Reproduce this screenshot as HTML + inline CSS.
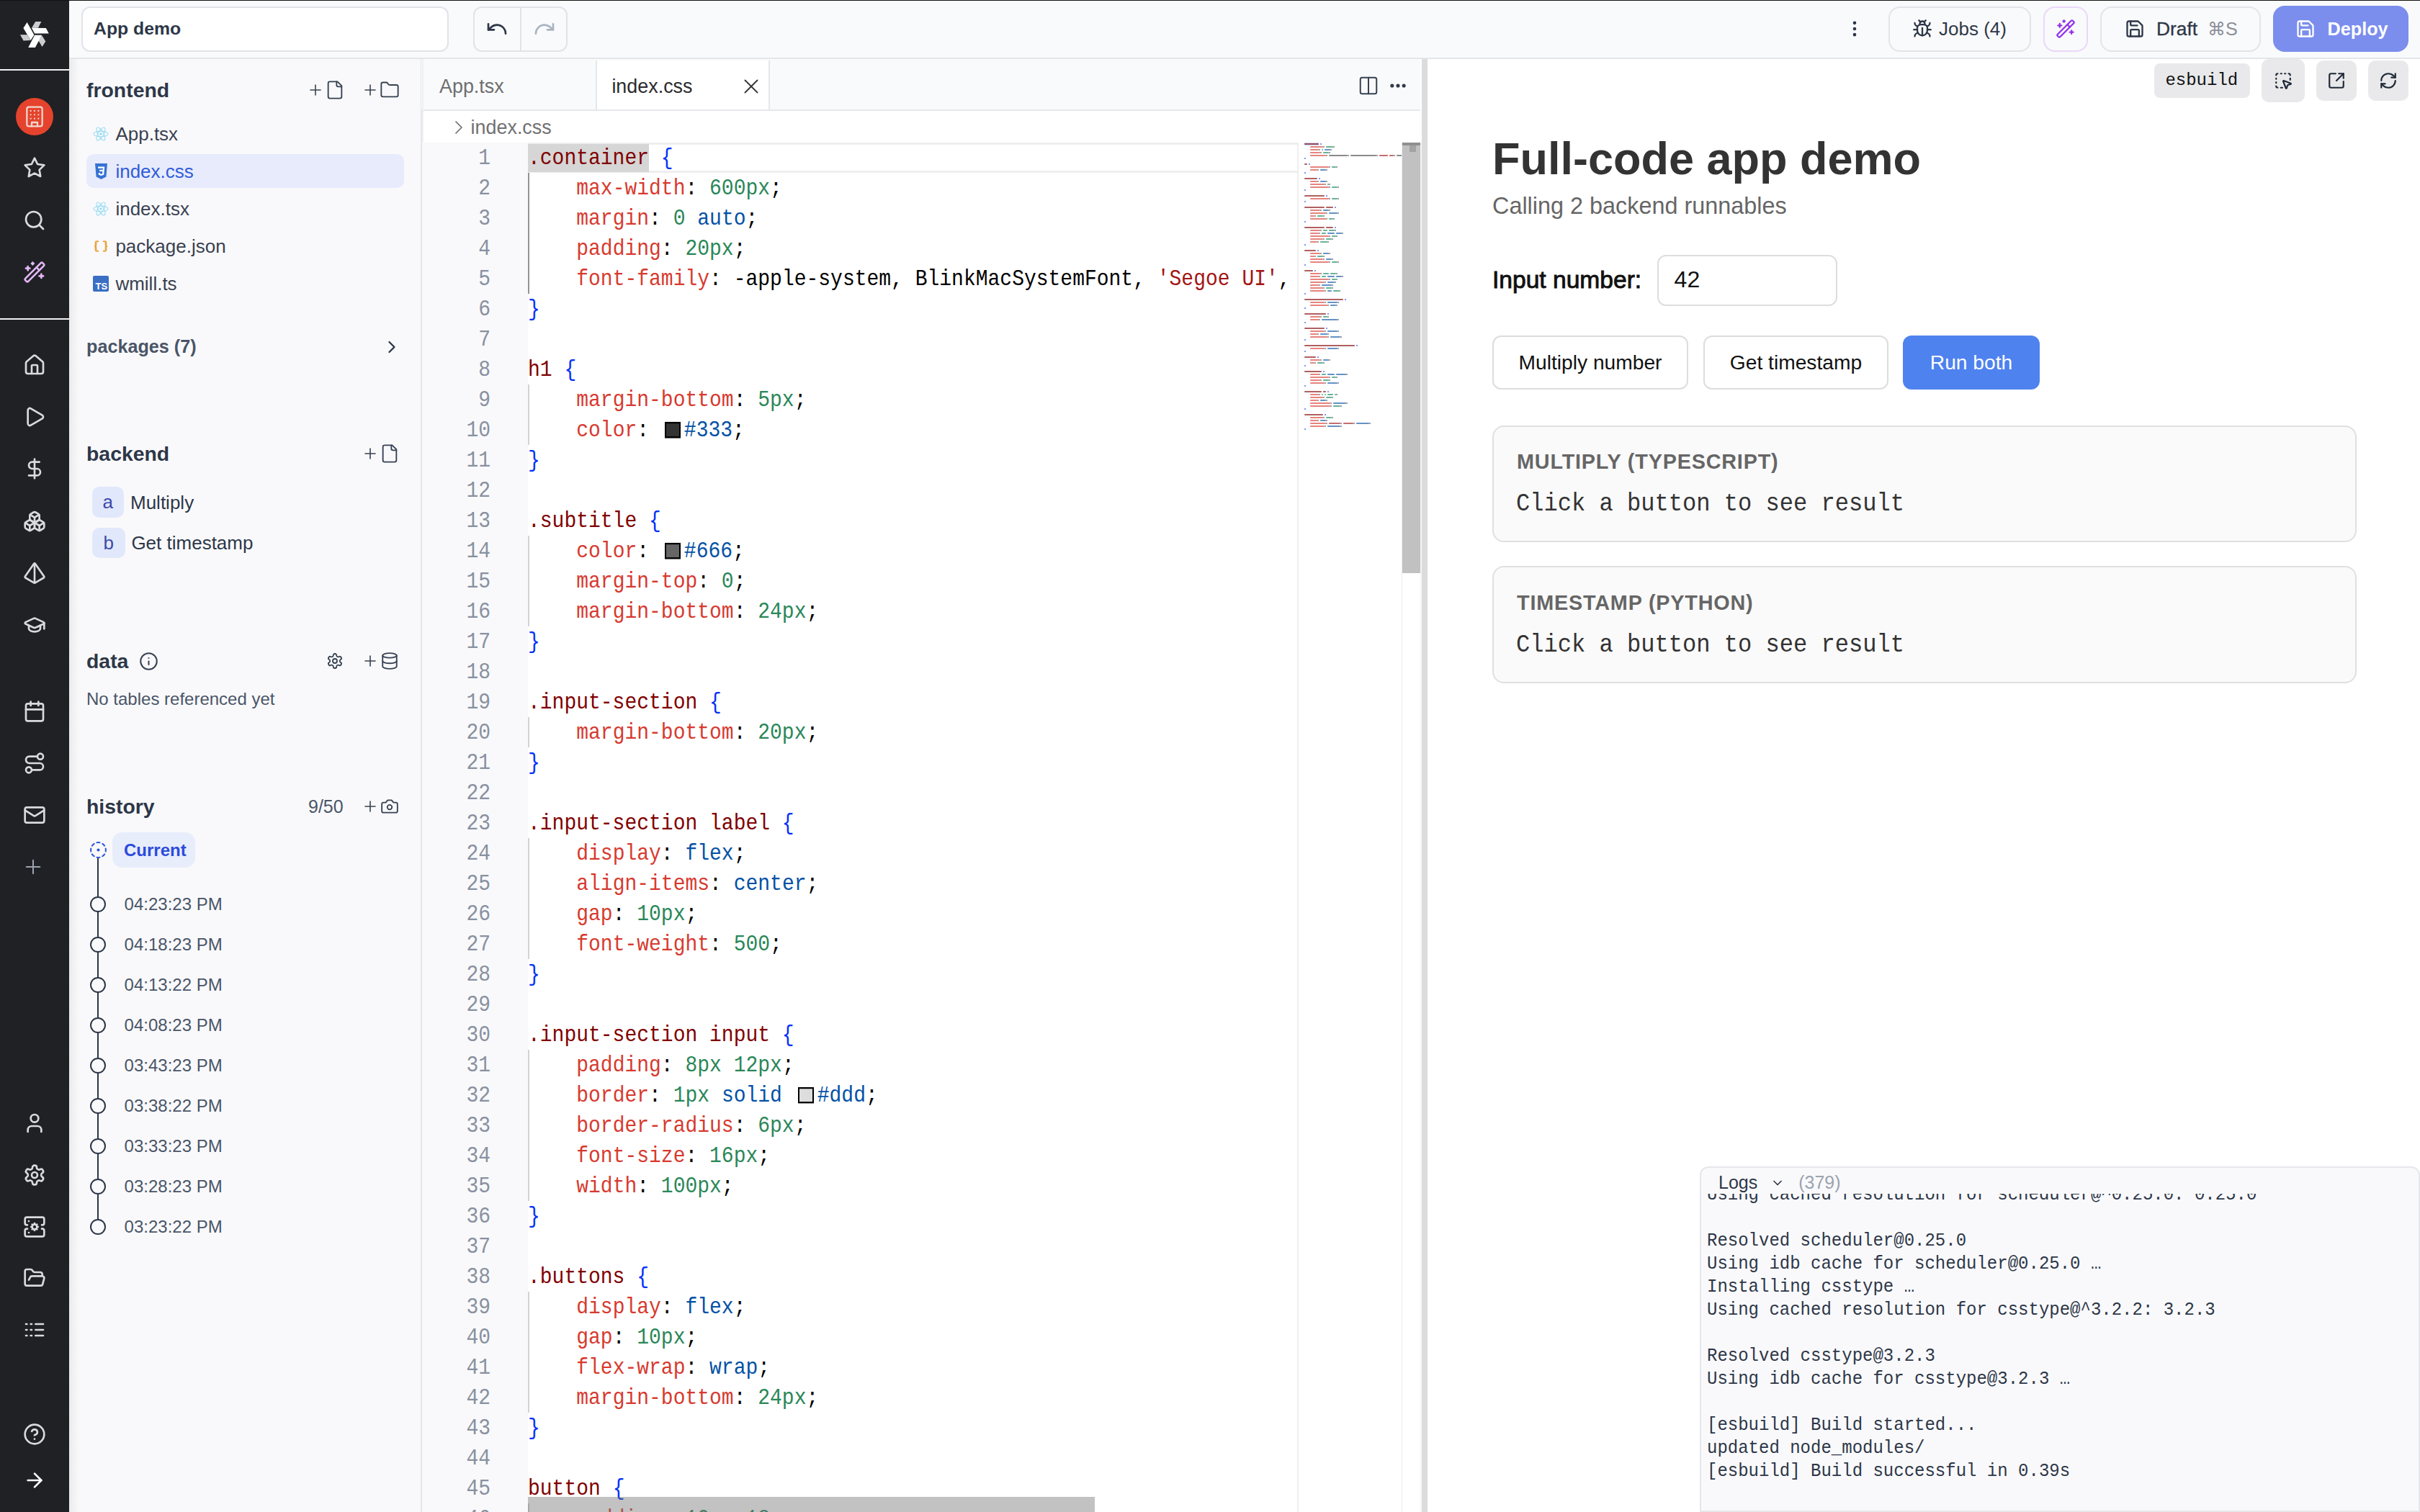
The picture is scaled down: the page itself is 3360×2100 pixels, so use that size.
<!DOCTYPE html><html><head><meta charset="utf-8"><style>html,body{margin:0;padding:0;width:3360px;height:2100px;overflow:hidden;background:#fff}
#r{zoom:2;width:1680px;height:1050px;position:relative;overflow:hidden;font-family:"Liberation Sans",sans-serif;color:#2d3748}
.a{position:absolute}
svg.i{position:absolute;fill:none;stroke:currentColor;stroke-width:2;stroke-linecap:round;stroke-linejoin:round;overflow:visible}
.t{position:absolute;white-space:pre;line-height:1}
/* sidebar */
#sb{left:0;top:0;width:48px;height:1050px;background:#1f2125}
.sbi{color:#d9dadd}
/* topbar */
#tb{left:48px;top:0;width:1632px;height:40px;background:#f9fafb;border-bottom:1px solid #e4e6ea}
.btn{position:absolute;box-sizing:border-box;border:1px solid #e2e4e9;border-radius:8px}
/* left panel */
#lp{left:48px;top:41px;width:244px;height:1009px;background:#f9f9fb;border-right:1px solid #e5e7eb}
.h{font-weight:700;font-size:14px;color:#2d3748}
.fr{font-size:13px;color:#2d3748}
/* editor */
#ed{left:293px;top:41px;width:693px;height:1009px;background:#fff}
.code{position:absolute;left:366.5px;font-family:"Liberation Mono",monospace;font-size:14px;line-height:21px;white-space:pre;color:#000}
.ln{position:absolute;left:293px;width:47.5px;text-align:right;font-family:"Liberation Mono",monospace;font-size:14px;line-height:21px;color:#8891a0}
.s{color:#800000}.p{color:#d73a2f}.n{color:#2a8758}.k{color:#0451a5}.b{color:#0431fa}.q{color:#a31515}
.sw{display:inline-block;box-sizing:border-box;width:11px;height:10px;border:1.2px solid #000;margin:0 2.5px 0 2.5px;vertical-align:-1px}
.cl{height:21px;line-height:21px;white-space:pre}.cl>span{display:inline-block;transform:translateY(0.9px) scaleY(1.12);transform-origin:0 60%}
</style></head><body><div id="r"><div id="sb" class="a"><svg class="a" style="left:14px;top:14px;width:20px;height:20px" viewBox="0 0 20 20">
<g fill="#cdcdcf"><path d="M10.6 1 L14.7 1 L12.5 5.35 L8.04 5.35Z"/><path d="M15.07 10.63 L17.67 14.7 L15.26 18.5 L12.76 14.24Z"/><path d="M-0.02 10.07 L4.89 10.07 L7.1 14.06 L2.3 14.24Z"/></g>
<g fill="#ffffff"><path d="M4.8 1.56 L9.7 10.26 L7.3 14.06 L2.2 5.54Z"/><path d="M7.94 5.35 L17.94 5.44 L19.9 9.24 L10.07 9.24Z"/><path d="M10.07 10.35 L15.07 10.35 L10.44 18.96 L5.63 18.96Z"/></g></svg><div class="a" style="left:0;top:48px;width:48px;height:1.2px;background:#f2f2f4"></div><div class="a" style="left:11px;top:68px;width:26px;height:26px;border-radius:50%;background:#e5432d"></div><svg class="i" viewBox="0 0 24 24" style="left:15.90px;top:73.20px;width:16px;height:16px;stroke-width:1.7;color:#f3d6d0"><rect width="16" height="20" x="4" y="2" rx="2" ry="2"/><path d="M9 22v-4h6v4"/><path d="M8 6h.01"/><path d="M16 6h.01"/><path d="M12 6h.01"/><path d="M12 10h.01"/><path d="M12 14h.01"/><path d="M16 10h.01"/><path d="M16 14h.01"/><path d="M8 10h.01"/><path d="M8 14h.01"/></svg><svg class="i" viewBox="0 0 24 24" style="left:16.00px;top:108.70px;width:16px;height:16px;stroke-width:2;color:#d9dadd"><polygon points="12 2 15.09 8.26 22 9.27 17 14.14 18.18 21.02 12 17.77 5.82 21.02 7 14.14 2 9.27 8.91 8.26 12 2"/></svg><svg class="i" viewBox="0 0 24 24" style="left:16.00px;top:144.80px;width:16px;height:16px;stroke-width:2;color:#d9dadd"><circle cx="11" cy="11" r="8"/><path d="m21 21-4.3-4.3"/></svg><svg class="i" viewBox="0 0 24 24" style="left:16.00px;top:180.90px;width:16px;height:16px;stroke-width:2;color:#e4b6f7"><path d="m21.64 3.64-1.28-1.28a1.21 1.21 0 0 0-1.72 0L2.36 18.64a1.21 1.21 0 0 0 0 1.72l1.28 1.28a1.2 1.2 0 0 0 1.72 0L21.64 5.36a1.2 1.2 0 0 0 0-1.72"/><path d="m14 7 3 3"/><path d="M5 6v4"/><path d="M19 14v4"/><path d="M10 2v2"/><path d="M7 8H3"/><path d="M21 16h-4"/><path d="M11 3H9"/></svg><div class="a" style="left:0;top:221px;width:48px;height:1.2px;background:#f2f2f4"></div><svg class="i" viewBox="0 0 24 24" style="left:16.00px;top:245.50px;width:16px;height:16px;stroke-width:2;color:#d9dadd"><path d="M15 21v-8a1 1 0 0 0-1-1h-4a1 1 0 0 0-1 1v8"/><path d="M3 10a2 2 0 0 1 .709-1.528l7-5.999a2 2 0 0 1 2.582 0l7 5.999A2 2 0 0 1 21 10v9a2 2 0 0 1-2 2H5a2 2 0 0 1-2-2z"/></svg><svg class="i" viewBox="0 0 24 24" style="left:16.00px;top:281.60px;width:16px;height:16px;stroke-width:2;color:#d9dadd"><path d="M5 5a2 2 0 0 1 3.008-1.728l11.997 6.998a2 2 0 0 1 .003 3.458l-12 7A2 2 0 0 1 5 19z"/></svg><svg class="i" viewBox="0 0 24 24" style="left:16.00px;top:317.70px;width:16px;height:16px;stroke-width:2;color:#d9dadd"><line x1="12" x2="12" y1="2" y2="22"/><path d="M17 5H9.5a3.5 3.5 0 0 0 0 7h5a3.5 3.5 0 0 1 0 7H6"/></svg><svg class="i" viewBox="0 0 24 24" style="left:16.00px;top:353.80px;width:16px;height:16px;stroke-width:2;color:#d9dadd"><path d="M2.97 12.92A2 2 0 0 0 2 14.63v3.24a2 2 0 0 0 .97 1.71l3 1.8a2 2 0 0 0 2.06 0L12 19v-5.5l-5-3-4.03 2.42Z"/><path d="m7 16.5-4.74-2.85"/><path d="m7 16.5 5-3"/><path d="M7 16.5v5.17"/><path d="M12 13.5V19l3.97 2.38a2 2 0 0 0 2.06 0l3-1.8a2 2 0 0 0 .97-1.71v-3.24a2 2 0 0 0-.97-1.71L17 10.5l-5 3Z"/><path d="m17 16.5-5-3"/><path d="m17 16.5 4.74-2.85"/><path d="M17 16.5v5.17"/><path d="M7.97 4.42A2 2 0 0 0 7 6.13v4.37l5 3 5-3V6.13a2 2 0 0 0-.97-1.71l-3-1.8a2 2 0 0 0-2.06 0l-3 1.8Z"/><path d="M12 8 7.26 5.15"/><path d="m12 8 4.74-2.85"/><path d="M12 13.5V8"/></svg><svg class="i" viewBox="0 0 24 24" style="left:16.00px;top:390.00px;width:16px;height:16px;stroke-width:2;color:#d9dadd"><path d="M2.5 16.88a1 1 0 0 1-.32-1.43l9-13.02a1 1 0 0 1 1.64 0l9 13.01a1 1 0 0 1-.33 1.44l-8.49 5.02a2 2 0 0 1-2.02 0z"/><path d="M12 2v20"/></svg><svg class="i" viewBox="0 0 24 24" style="left:16.00px;top:426.00px;width:16px;height:16px;stroke-width:2;color:#d9dadd"><path d="M21.42 10.922a1 1 0 0 0-.019-1.838L12.83 5.18a2 2 0 0 0-1.66 0L2.6 9.08a1 1 0 0 0 0 1.832l8.57 3.908a2 2 0 0 0 1.66 0z"/><path d="M22 10v6"/><path d="M6 12.5V16a6 3 0 0 0 12 0v-3.5"/></svg><svg class="i" viewBox="0 0 24 24" style="left:16.00px;top:485.75px;width:16px;height:16px;stroke-width:2;color:#d9dadd"><rect width="18" height="18" x="3" y="4" rx="2"/><path d="M16 2v4"/><path d="M8 2v4"/><path d="M3 10h18"/></svg><svg class="i" viewBox="0 0 24 24" style="left:16.00px;top:522.00px;width:16px;height:16px;stroke-width:2;color:#d9dadd"><circle cx="6" cy="19" r="3"/><path d="M9 19h8.5a3.5 3.5 0 0 0 0-7h-11a3.5 3.5 0 0 1 0-7H15"/><circle cx="18" cy="5" r="3"/></svg><svg class="i" viewBox="0 0 24 24" style="left:16.00px;top:558.00px;width:16px;height:16px;stroke-width:2;color:#d9dadd"><rect width="20" height="16" x="2" y="4" rx="2"/><path d="m22 7-8.97 5.7a1.94 1.94 0 0 1-2.06 0L2 7"/></svg><svg class="i" viewBox="0 0 24 24" style="left:16.00px;top:772.00px;width:16px;height:16px;stroke-width:2;color:#d9dadd"><path d="M19 21v-2a4 4 0 0 0-4-4H9a4 4 0 0 0-4 4v2"/><circle cx="12" cy="7" r="4"/></svg><svg class="i" viewBox="0 0 24 24" style="left:16.00px;top:808.00px;width:16px;height:16px;stroke-width:2;color:#d9dadd"><path d="M12.22 2h-.44a2 2 0 0 0-2 2v.18a2 2 0 0 1-1 1.73l-.43.25a2 2 0 0 1-2 0l-.15-.08a2 2 0 0 0-2.73.73l-.22.38a2 2 0 0 0 .73 2.73l.15.1a2 2 0 0 1 1 1.72v.51a2 2 0 0 1-1 1.74l-.15.09a2 2 0 0 0-.73 2.73l.22.38a2 2 0 0 0 2.73.73l.15-.08a2 2 0 0 1 2 0l.43.25a2 2 0 0 1 1 1.73V20a2 2 0 0 0 2 2h.44a2 2 0 0 0 2-2v-.18a2 2 0 0 1 1-1.73l.43-.25a2 2 0 0 1 2 0l.15.08a2 2 0 0 0 2.73-.73l.22-.39a2 2 0 0 0-.73-2.73l-.15-.08a2 2 0 0 1-1-1.74v-.5a2 2 0 0 1 1-1.74l.15-.09a2 2 0 0 0 .73-2.73l-.22-.38a2 2 0 0 0-2.73-.73l-.15.08a2 2 0 0 1-2 0l-.43-.25a2 2 0 0 1-1-1.73V4a2 2 0 0 0-2-2z"/><circle cx="12" cy="12" r="3"/></svg><svg class="i" viewBox="0 0 24 24" style="left:16.00px;top:844.00px;width:16px;height:16px;stroke-width:2;color:#d9dadd"><circle cx="12" cy="12" r="2.6"/><path d="M12 8.4v1M12 14.6v1M8.4 12h1M14.6 12h1M9.5 9.5l.7.7M13.8 13.8l.7.7M9.5 14.5l.7-.7M13.8 10.2l.7-.7"/><path d="M4.5 10H4a2 2 0 0 1-2-2V4a2 2 0 0 1 2-2h16a2 2 0 0 1 2 2v4a2 2 0 0 1-2 2h-.5"/><path d="M4.5 14H4a2 2 0 0 0-2 2v4a2 2 0 0 0 2 2h16a2 2 0 0 0 2-2v-4a2 2 0 0 0-2-2h-.5"/><path d="M6 18h.01"/><path d="M6 6h.01"/></svg><svg class="i" viewBox="0 0 24 24" style="left:16.00px;top:879.50px;width:16px;height:16px;stroke-width:2;color:#d9dadd"><path d="m6 14 1.5-2.9A2 2 0 0 1 9.24 10H20a2 2 0 0 1 1.94 2.5l-1.54 6a2 2 0 0 1-1.95 1.5H4a2 2 0 0 1-2-2V5a2 2 0 0 1 2-2h3.9a2 2 0 0 1 1.69.9l.81 1.2a2 2 0 0 0 1.67.9H18a2 2 0 0 1 2 2v2"/></svg><svg class="i" viewBox="0 0 24 24" style="left:16.00px;top:915.60px;width:16px;height:16px;stroke-width:2;color:#d9dadd"><path d="M13 12h8"/><path d="M13 18h8"/><path d="M13 6h8"/><path d="M3 12h1"/><path d="M3 18h1"/><path d="M3 6h1"/><path d="M8 12h1"/><path d="M8 18h1"/><path d="M8 6h1"/></svg><svg class="i" viewBox="0 0 24 24" style="left:16.00px;top:988.00px;width:16px;height:16px;stroke-width:2;color:#d9dadd"><circle cx="12" cy="12" r="10"/><path d="M9.09 9a3 3 0 0 1 5.83 1c0 2-3 3-3 3"/><path d="M12 17h.01"/></svg><svg class="i" viewBox="0 0 24 24" style="left:16.00px;top:1019.80px;width:16px;height:16px;stroke-width:2;color:#ffffff"><path d="M5 12h14"/><path d="m12 5 7 7-7 7"/></svg><svg class="i" viewBox="0 0 24 24" style="left:15.00px;top:594.00px;width:16px;height:16px;stroke-width:1.5;color:#9ca3af"><path d="M5 12h14"/><path d="M12 5v14"/></svg></div><div id="tb" class="a"></div><div class="a" style="left:0;top:0;width:1680px;height:0.6px;background:#111"></div><div class="a" style="left:56.5px;top:4.5px;width:255px;height:31.25px;box-sizing:border-box;border:1px solid #e1e3e8;border-radius:6px;background:#fff"></div><div class="t" style="left:65px;top:14.00px;font-size:12.4px;height:12.4px;line-height:12.4px;color:#2d3748;font-weight:700;font-family:'Liberation Sans';">App demo</div><div class="a" style="left:328.5px;top:4.5px;width:65.5px;height:31.25px;box-sizing:border-box;border:1px solid #e1e3e8;border-radius:6px;background:#f9fafb"></div><div class="a" style="left:361px;top:5px;width:1px;height:30.25px;background:#e1e3e8"></div><svg class="i" viewBox="0 0 24 24" style="left:337.00px;top:11.90px;width:16px;height:16px;stroke-width:2;color:#2d3748"><path d="M3 7v6h6"/><path d="M21 17a9 9 0 0 0-9-9 9 9 0 0 0-6 2.3L3 13"/></svg><svg class="i" viewBox="0 0 24 24" style="left:370.00px;top:11.90px;width:16px;height:16px;stroke-width:2;color:#a9b4c2"><path d="M21 7v6h-6"/><path d="M3 17a9 9 0 0 1 9-9 9 9 0 0 1 6 2.3l3 2.7"/></svg><svg class="i" viewBox="0 0 24 24" style="left:1280.50px;top:13.00px;width:14px;height:14px;stroke-width:2;color:#2d3748"><circle cx="12" cy="12" r="1"/><circle cx="12" cy="5" r="1"/><circle cx="12" cy="19" r="1"/></svg><div class="btn" style="left:1311px;top:4.25px;width:99px;height:31.5px"></div><svg class="i" viewBox="0 0 24 24" style="left:1327.50px;top:13.20px;width:14px;height:14px;stroke-width:2;color:#2d3748"><path d="m8 2 1.88 1.88"/><path d="M14.12 3.88 16 2"/><path d="M9 7.13v-1a3.003 3.003 0 1 1 6 0v1"/><path d="M12 20c-3.3 0-6-2.7-6-6v-3a4 4 0 0 1 4-4h4a4 4 0 0 1 4 4v3c0 3.3-2.7 6-6 6"/><path d="M12 20v-9"/><path d="M6.53 9C4.6 8.8 3 7.1 3 5"/><path d="M6 13H2"/><path d="M3 21c0-2.1 1.7-3.9 3.8-4"/><path d="M20.97 5c0 2.1-1.6 3.8-3.5 4"/><path d="M22 13h-4"/><path d="M17.2 17c2.1.1 3.8 1.9 3.8 4"/></svg><div class="t" style="left:1346px;top:13.70px;font-size:13px;height:13px;line-height:13px;color:#2d3748;font-weight:400;font-family:'Liberation Sans';">Jobs (4)</div><div class="btn" style="left:1418.4px;top:4.25px;width:31.2px;height:31.5px;border-color:#ead7fb"></div><svg class="i" viewBox="0 0 24 24" style="left:1427.00px;top:13.00px;width:14px;height:14px;stroke-width:2;color:#9333ea"><path d="m21.64 3.64-1.28-1.28a1.21 1.21 0 0 0-1.72 0L2.36 18.64a1.21 1.21 0 0 0 0 1.72l1.28 1.28a1.2 1.2 0 0 0 1.72 0L21.64 5.36a1.2 1.2 0 0 0 0-1.72"/><path d="m14 7 3 3"/><path d="M5 6v4"/><path d="M19 14v4"/><path d="M10 2v2"/><path d="M7 8H3"/><path d="M21 16h-4"/><path d="M11 3H9"/></svg><div class="btn" style="left:1458px;top:4.25px;width:111.5px;height:31.5px"></div><svg class="i" viewBox="0 0 24 24" style="left:1474.80px;top:13.20px;width:14px;height:14px;stroke-width:2;color:#2d3748"><path d="M15.2 3a2 2 0 0 1 1.4.6l3.8 3.8a2 2 0 0 1 .6 1.4V19a2 2 0 0 1-2 2H5a2 2 0 0 1-2-2V5a2 2 0 0 1 2-2z"/><path d="M17 21v-7a1 1 0 0 0-1-1H8a1 1 0 0 0-1 1v7"/><path d="M7 3v4a1 1 0 0 0 1 1h7"/></svg><div class="t" style="left:1497px;top:13.60px;font-size:13.2px;height:13.2px;line-height:13.2px;color:#2d3748;font-weight:400;font-family:'Liberation Sans';-webkit-text-stroke:0.15px #2d3748">Draft</div><div class="t" style="left:1532.5px;top:13.90px;font-size:12.6px;height:12.6px;line-height:12.6px;color:#8b9099;font-weight:400;font-family:'Liberation Sans';">⌘S</div><div class="a" style="left:1578px;top:4px;width:94px;height:32px;border-radius:8px;background:#7b8eed"></div><svg class="i" viewBox="0 0 24 24" style="left:1593.50px;top:13.20px;width:14px;height:14px;stroke-width:2;color:#ffffff"><path d="M15.2 3a2 2 0 0 1 1.4.6l3.8 3.8a2 2 0 0 1 .6 1.4V19a2 2 0 0 1-2 2H5a2 2 0 0 1-2-2V5a2 2 0 0 1 2-2z"/><path d="M17 21v-7a1 1 0 0 0-1-1H8a1 1 0 0 0-1 1v7"/><path d="M7 3v4a1 1 0 0 0 1 1h7"/></svg><div class="t" style="left:1615.8px;top:13.90px;font-size:12.6px;height:12.6px;line-height:12.6px;color:#ffffff;font-weight:700;font-family:'Liberation Sans';">Deploy</div><div id="lp" class="a"></div><div class="a" style="left:48px;top:41px;width:7px;height:1009px;background:linear-gradient(to right,#ebebee,rgba(249,249,251,0))"></div><div class="t" style="left:60px;top:55.40px;font-size:14.2px;height:14.2px;line-height:14.2px;color:#2d3748;font-weight:700;font-family:'Liberation Sans';">frontend</div><svg class="i" viewBox="0 0 24 24" style="left:212.80px;top:56.50px;width:12px;height:12px;stroke-width:1.6;color:#364152"><path d="M5 12h14"/><path d="M12 5v14"/></svg><svg class="i" viewBox="0 0 24 24" style="left:225.25px;top:55.50px;width:14px;height:14px;stroke-width:1.6;color:#364152"><path d="M15 2H6a2 2 0 0 0-2 2v16a2 2 0 0 0 2 2h12a2 2 0 0 0 2-2V7Z"/><path d="M14 2v4a2 2 0 0 0 2 2h4"/></svg><svg class="i" viewBox="0 0 24 24" style="left:250.80px;top:56.50px;width:12px;height:12px;stroke-width:1.6;color:#364152"><path d="M5 12h14"/><path d="M12 5v14"/></svg><svg class="i" viewBox="0 0 24 24" style="left:263.40px;top:55.50px;width:14px;height:14px;stroke-width:1.6;color:#364152"><path d="M20 20a2 2 0 0 0 2-2V8a2 2 0 0 0-2-2h-7.9a2 2 0 0 1-1.69-.9L9.6 3.9A2 2 0 0 0 7.93 3H4a2 2 0 0 0-2 2v13a2 2 0 0 0 2 2Z"/></svg><div class="a" style="left:60px;top:107px;width:220.5px;height:23.7px;border-radius:5px;background:#e7ebfb"></div><svg class="a" style="left:64.5px;top:87.4px;width:11px;height:11px" viewBox="-12 -12 24 24"><g fill="none" stroke="#9bdcf3" stroke-width="1.2"><ellipse rx="11" ry="4.2"/><ellipse rx="11" ry="4.2" transform="rotate(60)"/><ellipse rx="11" ry="4.2" transform="rotate(120)"/></g><circle r="2" fill="#9bdcf3"/></svg><div class="t" style="left:80.2px;top:86.40px;font-size:13px;height:13px;line-height:13px;color:#394150;font-weight:400;font-family:'Liberation Sans';">App.tsx</div><svg class="a" style="left:65.5px;top:113.5px;width:9.5px;height:11px" viewBox="0 0 19 22"><path d="M1 0h17l-1.6 18.5L9.5 22 2.6 18.5z" fill="#3572d2"/><path d="M5 4.5h9.2l-1 11.2-3.7 1.4-3.6-1.4-.2-2.6h2.2l.1 1.2 1.5.5 1.6-.5.3-3.2H7.2V8.8h4.8l.2-2H5.2z" fill="#fff"/></svg><div class="t" style="left:80.2px;top:112.50px;font-size:13px;height:13px;line-height:13px;color:#2f5bd8;font-weight:400;font-family:'Liberation Sans';">index.css</div><svg class="a" style="left:64.5px;top:139.5px;width:11px;height:11px" viewBox="-12 -12 24 24"><g fill="none" stroke="#9bdcf3" stroke-width="1.2"><ellipse rx="11" ry="4.2"/><ellipse rx="11" ry="4.2" transform="rotate(60)"/><ellipse rx="11" ry="4.2" transform="rotate(120)"/></g><circle r="2" fill="#9bdcf3"/></svg><div class="t" style="left:80.2px;top:138.50px;font-size:13px;height:13px;line-height:13px;color:#394150;font-weight:400;font-family:'Liberation Sans';">index.tsx</div><svg class="a" style="left:64px;top:166.5px;width:12px;height:9px" viewBox="0 0 24 24" preserveAspectRatio="none" fill="none" stroke="#eba43a" stroke-width="2.6" stroke-linecap="round"><path d="M8 3H7a2 2 0 0 0-2 2v5a2 2 0 0 1-2 2 2 2 0 0 1 2 2v5a2 2 0 0 0 2 2h1"/><path d="M16 21h1a2 2 0 0 0 2-2v-5c0-1.1.9-2 2-2a2 2 0 0 1-2-2V5a2 2 0 0 0-2-2h-1"/></svg><div class="t" style="left:80.2px;top:164.50px;font-size:13px;height:13px;line-height:13px;color:#394150;font-weight:400;font-family:'Liberation Sans';">package.json</div><div class="a" style="left:64.3px;top:191.3px;width:11.4px;height:11.4px;background:#3b6fc4;border-radius:1px"></div><div class="t" style="left:66.3px;top:195.3px;font-size:6.5px;line-height:7px;color:#fff;font-weight:700">TS</div><div class="t" style="left:80.2px;top:190.50px;font-size:13px;height:13px;line-height:13px;color:#394150;font-weight:400;font-family:'Liberation Sans';">wmill.ts</div><div class="t" style="left:60px;top:234.50px;font-size:12.6px;height:12.6px;line-height:12.6px;color:#4a5568;font-weight:700;font-family:'Liberation Sans';">packages (7)</div><svg class="i" viewBox="0 0 24 24" style="left:265.00px;top:234.00px;width:14px;height:14px;stroke-width:2;color:#2d3748"><path d="m9 18 6-6-6-6"/></svg><div class="t" style="left:60px;top:307.90px;font-size:14.2px;height:14.2px;line-height:14.2px;color:#2d3748;font-weight:700;font-family:'Liberation Sans';">backend</div><svg class="i" viewBox="0 0 24 24" style="left:250.80px;top:309.00px;width:12px;height:12px;stroke-width:1.6;color:#364152"><path d="M5 12h14"/><path d="M12 5v14"/></svg><svg class="i" viewBox="0 0 24 24" style="left:263.30px;top:308.00px;width:14px;height:14px;stroke-width:1.6;color:#364152"><path d="M15 2H6a2 2 0 0 0-2 2v16a2 2 0 0 0 2 2h12a2 2 0 0 0 2-2V7Z"/><path d="M14 2v4a2 2 0 0 0 2 2h4"/></svg><div class="a" style="left:64px;top:338px;width:22px;height:21.5px;border-radius:5px;background:#e2e8fb"></div><div class="t" style="left:71.3px;top:342.00px;font-size:13px;height:13px;line-height:13px;color:#3b4ba8;font-weight:400;font-family:'Liberation Sans';">a</div><div class="t" style="left:90.5px;top:342.50px;font-size:13px;height:13px;line-height:13px;color:#2d3748;font-weight:400;font-family:'Liberation Sans';">Multiply</div><div class="a" style="left:64px;top:366.4px;width:23px;height:21px;border-radius:5px;background:#e2e8fb"></div><div class="t" style="left:71.8px;top:370.50px;font-size:13px;height:13px;line-height:13px;color:#3b4ba8;font-weight:400;font-family:'Liberation Sans';">b</div><div class="t" style="left:91.2px;top:370.50px;font-size:13px;height:13px;line-height:13px;color:#2d3748;font-weight:400;font-family:'Liberation Sans';">Get timestamp</div><div class="t" style="left:60px;top:451.90px;font-size:14.2px;height:14.2px;line-height:14.2px;color:#2d3748;font-weight:700;font-family:'Liberation Sans';">data</div><svg class="i" viewBox="0 0 24 24" style="left:96.25px;top:452.25px;width:13.5px;height:13.5px;stroke-width:1.8;color:#364152"><circle cx="12" cy="12" r="10"/><path d="M12 16v-4"/><path d="M12 8h.01"/></svg><svg class="i" viewBox="0 0 24 24" style="left:226.50px;top:453.00px;width:12px;height:12px;stroke-width:1.8;color:#364152"><path d="M12.22 2h-.44a2 2 0 0 0-2 2v.18a2 2 0 0 1-1 1.73l-.43.25a2 2 0 0 1-2 0l-.15-.08a2 2 0 0 0-2.73.73l-.22.38a2 2 0 0 0 .73 2.73l.15.1a2 2 0 0 1 1 1.72v.51a2 2 0 0 1-1 1.74l-.15.09a2 2 0 0 0-.73 2.73l.22.38a2 2 0 0 0 2.73.73l.15-.08a2 2 0 0 1 2 0l.43.25a2 2 0 0 1 1 1.73V20a2 2 0 0 0 2 2h.44a2 2 0 0 0 2-2v-.18a2 2 0 0 1 1-1.73l.43-.25a2 2 0 0 1 2 0l.15.08a2 2 0 0 0 2.73-.73l.22-.39a2 2 0 0 0-.73-2.73l-.15-.08a2 2 0 0 1-1-1.74v-.5a2 2 0 0 1 1-1.74l.15-.09a2 2 0 0 0 .73-2.73l-.22-.38a2 2 0 0 0-2.73-.73l-.15.08a2 2 0 0 1-2 0l-.43-.25a2 2 0 0 1-1-1.73V4a2 2 0 0 0-2-2z"/><circle cx="12" cy="12" r="3"/></svg><svg class="i" viewBox="0 0 24 24" style="left:250.80px;top:453.00px;width:12px;height:12px;stroke-width:1.6;color:#364152"><path d="M5 12h14"/><path d="M12 5v14"/></svg><svg class="i" viewBox="0 0 24 24" style="left:263.80px;top:452.50px;width:13px;height:13px;stroke-width:1.7;color:#364152"><ellipse cx="12" cy="5" rx="9" ry="3"/><path d="M3 5V19A9 3 0 0 0 21 19V5"/><path d="M3 12A9 3 0 0 0 21 12"/></svg><div class="t" style="left:60px;top:479.60px;font-size:12px;height:12px;line-height:12px;color:#4a5568;font-weight:400;font-family:'Liberation Sans';">No tables referenced yet</div><div class="t" style="left:60px;top:552.90px;font-size:14.2px;height:14.2px;line-height:14.2px;color:#2d3748;font-weight:700;font-family:'Liberation Sans';">history</div><div class="t" style="left:214px;top:553.75px;font-size:12.5px;height:12.5px;line-height:12.5px;color:#4a5568;font-weight:400;font-family:'Liberation Sans';">9/50</div><svg class="i" viewBox="0 0 24 24" style="left:250.80px;top:554.00px;width:12px;height:12px;stroke-width:1.6;color:#364152"><path d="M5 12h14"/><path d="M12 5v14"/></svg><svg class="i" viewBox="0 0 24 24" style="left:263.80px;top:553.50px;width:13px;height:13px;stroke-width:1.7;color:#364152"><path d="M14.5 4h-5L7 7H4a2 2 0 0 0-2 2v9a2 2 0 0 0 2 2h16a2 2 0 0 0 2-2V9a2 2 0 0 0-2-2h-3l-2.5-3z"/><circle cx="12" cy="13" r="3"/></svg><div class="a" style="left:78px;top:578px;width:57.5px;height:24.5px;border-radius:7px;background:#e8edfc"></div><div class="t" style="left:86px;top:584.30px;font-size:12px;height:12px;line-height:12px;color:#2c4bdc;font-weight:700;font-family:'Liberation Sans';">Current</div><svg class="i" viewBox="0 0 24 24" style="left:61.75px;top:583.75px;width:12.5px;height:12.5px;stroke-width:2;color:#3056dc"><path d="M10.1 2.182a10 10 0 0 1 3.8 0"/><path d="M13.9 21.818a10 10 0 0 1-3.8 0"/><path d="M17.609 3.721a10 10 0 0 1 2.69 2.7"/><path d="M2.182 13.9a10 10 0 0 1 0-3.8"/><path d="M20.279 17.609a10 10 0 0 1-2.7 2.69"/><path d="M21.818 10.1a10 10 0 0 1 0 3.8"/><path d="M3.721 6.391a10 10 0 0 1 2.7-2.69"/><path d="M6.391 20.279a10 10 0 0 1-2.69-2.7"/><circle cx="12" cy="12" r="1"/></svg><div class="a" style="left:67.25px;top:596px;width:1px;height:256px;background:#2d3748"></div><div class="a" style="left:62.55px;top:622.55px;width:10.9px;height:10.9px;box-sizing:border-box;border:1px solid #2d3748;border-radius:50%;background:#f9f9fb"></div><div class="t" style="left:86.3px;top:622.00px;font-size:12px;height:12px;line-height:12px;color:#4a5568;font-weight:400;font-family:'Liberation Sans';">04:23:23 PM</div><div class="a" style="left:62.55px;top:650.55px;width:10.9px;height:10.9px;box-sizing:border-box;border:1px solid #2d3748;border-radius:50%;background:#f9f9fb"></div><div class="t" style="left:86.3px;top:650.00px;font-size:12px;height:12px;line-height:12px;color:#4a5568;font-weight:400;font-family:'Liberation Sans';">04:18:23 PM</div><div class="a" style="left:62.55px;top:678.55px;width:10.9px;height:10.9px;box-sizing:border-box;border:1px solid #2d3748;border-radius:50%;background:#f9f9fb"></div><div class="t" style="left:86.3px;top:678.00px;font-size:12px;height:12px;line-height:12px;color:#4a5568;font-weight:400;font-family:'Liberation Sans';">04:13:22 PM</div><div class="a" style="left:62.55px;top:706.55px;width:10.9px;height:10.9px;box-sizing:border-box;border:1px solid #2d3748;border-radius:50%;background:#f9f9fb"></div><div class="t" style="left:86.3px;top:706.00px;font-size:12px;height:12px;line-height:12px;color:#4a5568;font-weight:400;font-family:'Liberation Sans';">04:08:23 PM</div><div class="a" style="left:62.55px;top:734.55px;width:10.9px;height:10.9px;box-sizing:border-box;border:1px solid #2d3748;border-radius:50%;background:#f9f9fb"></div><div class="t" style="left:86.3px;top:734.00px;font-size:12px;height:12px;line-height:12px;color:#4a5568;font-weight:400;font-family:'Liberation Sans';">03:43:23 PM</div><div class="a" style="left:62.55px;top:762.55px;width:10.9px;height:10.9px;box-sizing:border-box;border:1px solid #2d3748;border-radius:50%;background:#f9f9fb"></div><div class="t" style="left:86.3px;top:762.00px;font-size:12px;height:12px;line-height:12px;color:#4a5568;font-weight:400;font-family:'Liberation Sans';">03:38:22 PM</div><div class="a" style="left:62.55px;top:790.55px;width:10.9px;height:10.9px;box-sizing:border-box;border:1px solid #2d3748;border-radius:50%;background:#f9f9fb"></div><div class="t" style="left:86.3px;top:790.00px;font-size:12px;height:12px;line-height:12px;color:#4a5568;font-weight:400;font-family:'Liberation Sans';">03:33:23 PM</div><div class="a" style="left:62.55px;top:818.55px;width:10.9px;height:10.9px;box-sizing:border-box;border:1px solid #2d3748;border-radius:50%;background:#f9f9fb"></div><div class="t" style="left:86.3px;top:818.00px;font-size:12px;height:12px;line-height:12px;color:#4a5568;font-weight:400;font-family:'Liberation Sans';">03:28:23 PM</div><div class="a" style="left:62.55px;top:846.55px;width:10.9px;height:10.9px;box-sizing:border-box;border:1px solid #2d3748;border-radius:50%;background:#f9f9fb"></div><div class="t" style="left:86.3px;top:846.00px;font-size:12px;height:12px;line-height:12px;color:#4a5568;font-weight:400;font-family:'Liberation Sans';">03:23:22 PM</div><div id="ed" class="a"></div><div class="a" style="left:292.5px;top:41px;width:693.5px;height:35px;background:#f9fafb;border-bottom:1px solid #e5e7eb"></div><div class="a" style="left:293px;top:41px;width:1px;height:1009px;background:#eef0f3"></div><div class="a" style="left:413.5px;top:42px;width:121px;height:34px;background:#fff;border-left:1px solid #e5e7eb;border-right:1px solid #e5e7eb;box-sizing:border-box"></div><div class="t" style="left:305px;top:53.27px;font-size:13.45px;height:13.45px;line-height:13.45px;color:#6e6e70;font-weight:400;font-family:'Liberation Sans';">App.tsx</div><div class="t" style="left:424.7px;top:53.27px;font-size:13.45px;height:13.45px;line-height:13.45px;color:#2b2b2d;font-weight:400;font-family:'Liberation Sans';">index.css</div><svg class="i" viewBox="0 0 24 24" style="left:512.90px;top:51.50px;width:17px;height:17px;stroke-width:1.3;color:#333333"><path d="M18 6 6 18"/><path d="m6 6 12 12"/></svg><svg class="i" viewBox="0 0 24 24" style="left:942.50px;top:52.00px;width:15px;height:15px;stroke-width:1.6;color:#364152"><rect width="18" height="18" x="3" y="3" rx="2"/><path d="M12 3v18"/></svg><svg class="i" viewBox="0 0 24 24" style="left:963.50px;top:52.50px;width:14px;height:14px;stroke-width:2.4;color:#2d3748"><circle cx="12" cy="12" r="1"/><circle cx="19" cy="12" r="1"/><circle cx="5" cy="12" r="1"/></svg><svg class="i" viewBox="0 0 24 24" style="left:310.50px;top:80.60px;width:16px;height:16px;stroke-width:1.3;color:#6e6e70"><path d="m9 18 6-6-6-6"/></svg><div class="t" style="left:326.8px;top:81.88px;font-size:13.45px;height:13.45px;line-height:13.45px;color:#717173;font-weight:400;font-family:'Liberation Sans';">index.css</div><div class="a" style="left:293px;top:99px;width:73.5px;height:951px;background:#f9f9fb"></div><div class="a" style="left:366.5px;top:99px;width:535px;height:21px;box-sizing:border-box;border-top:1.5px solid #eeeeee;border-bottom:1.5px solid #eeeeee"></div><div class="a" style="left:366.5px;top:100px;width:84px;height:19.5px;background:#d6d6d6"></div><div class="a" style="left:366.5px;top:120px;width:1px;height:84px;background:#939393"></div><div class="a" style="left:366.5px;top:267px;width:1px;height:42px;background:#d3d3d3"></div><div class="a" style="left:366.5px;top:372px;width:1px;height:63px;background:#d3d3d3"></div><div class="a" style="left:366.5px;top:498px;width:1px;height:21px;background:#d3d3d3"></div><div class="a" style="left:366.5px;top:582px;width:1px;height:84px;background:#d3d3d3"></div><div class="a" style="left:366.5px;top:729px;width:1px;height:105px;background:#d3d3d3"></div><div class="a" style="left:366.5px;top:897px;width:1px;height:84px;background:#d3d3d3"></div><div class="a" style="left:366.5px;top:1044px;width:1px;height:147px;background:#d3d3d3"></div><div class="ln" style="top:99px;height:951px;overflow:hidden"><div class="cl"><span>1</span></div><div class="cl"><span>2</span></div><div class="cl"><span>3</span></div><div class="cl"><span>4</span></div><div class="cl"><span>5</span></div><div class="cl"><span>6</span></div><div class="cl"><span>7</span></div><div class="cl"><span>8</span></div><div class="cl"><span>9</span></div><div class="cl"><span>10</span></div><div class="cl"><span>11</span></div><div class="cl"><span>12</span></div><div class="cl"><span>13</span></div><div class="cl"><span>14</span></div><div class="cl"><span>15</span></div><div class="cl"><span>16</span></div><div class="cl"><span>17</span></div><div class="cl"><span>18</span></div><div class="cl"><span>19</span></div><div class="cl"><span>20</span></div><div class="cl"><span>21</span></div><div class="cl"><span>22</span></div><div class="cl"><span>23</span></div><div class="cl"><span>24</span></div><div class="cl"><span>25</span></div><div class="cl"><span>26</span></div><div class="cl"><span>27</span></div><div class="cl"><span>28</span></div><div class="cl"><span>29</span></div><div class="cl"><span>30</span></div><div class="cl"><span>31</span></div><div class="cl"><span>32</span></div><div class="cl"><span>33</span></div><div class="cl"><span>34</span></div><div class="cl"><span>35</span></div><div class="cl"><span>36</span></div><div class="cl"><span>37</span></div><div class="cl"><span>38</span></div><div class="cl"><span>39</span></div><div class="cl"><span>40</span></div><div class="cl"><span>41</span></div><div class="cl"><span>42</span></div><div class="cl"><span>43</span></div><div class="cl"><span>44</span></div><div class="cl"><span>45</span></div><div class="cl"><span>46</span></div></div><div class="code" style="top:99px;height:951px;width:540px;overflow:hidden"><div class="cl"><span><span class="s">.container </span><span class="b">{</span></span></div><div class="cl"><span>    <span class="p">max-width</span>: <span class="n">600px</span>;</span></div><div class="cl"><span>    <span class="p">margin</span>: <span class="n">0</span> <span class="k">auto</span>;</span></div><div class="cl"><span>    <span class="p">padding</span>: <span class="n">20px</span>;</span></div><div class="cl"><span>    <span class="p">font-family</span>: -apple-system, BlinkMacSystemFont, <span class="q">&#x27;Segoe UI&#x27;</span>, Roboto, sans-serif;</span></div><div class="cl"><span><span class="b">}</span></span></div><div class="cl"><span></span></div><div class="cl"><span><span class="s">h1 </span><span class="b">{</span></span></div><div class="cl"><span>    <span class="p">margin-bottom</span>: <span class="n">5px</span>;</span></div><div class="cl"><span>    <span class="p">color</span>: <span class="sw" style="background:#333"></span><span class="k">#333</span>;</span></div><div class="cl"><span><span class="b">}</span></span></div><div class="cl"><span></span></div><div class="cl"><span><span class="s">.subtitle </span><span class="b">{</span></span></div><div class="cl"><span>    <span class="p">color</span>: <span class="sw" style="background:#666"></span><span class="k">#666</span>;</span></div><div class="cl"><span>    <span class="p">margin-top</span>: <span class="n">0</span>;</span></div><div class="cl"><span>    <span class="p">margin-bottom</span>: <span class="n">24px</span>;</span></div><div class="cl"><span><span class="b">}</span></span></div><div class="cl"><span></span></div><div class="cl"><span><span class="s">.input-section </span><span class="b">{</span></span></div><div class="cl"><span>    <span class="p">margin-bottom</span>: <span class="n">20px</span>;</span></div><div class="cl"><span><span class="b">}</span></span></div><div class="cl"><span></span></div><div class="cl"><span><span class="s">.input-section label </span><span class="b">{</span></span></div><div class="cl"><span>    <span class="p">display</span>: <span class="k">flex</span>;</span></div><div class="cl"><span>    <span class="p">align-items</span>: <span class="k">center</span>;</span></div><div class="cl"><span>    <span class="p">gap</span>: <span class="n">10px</span>;</span></div><div class="cl"><span>    <span class="p">font-weight</span>: <span class="n">500</span>;</span></div><div class="cl"><span><span class="b">}</span></span></div><div class="cl"><span></span></div><div class="cl"><span><span class="s">.input-section input </span><span class="b">{</span></span></div><div class="cl"><span>    <span class="p">padding</span>: <span class="n">8px</span> <span class="n">12px</span>;</span></div><div class="cl"><span>    <span class="p">border</span>: <span class="n">1px</span> <span class="k">solid</span> <span class="sw" style="background:#ddd"></span><span class="k">#ddd</span>;</span></div><div class="cl"><span>    <span class="p">border-radius</span>: <span class="n">6px</span>;</span></div><div class="cl"><span>    <span class="p">font-size</span>: <span class="n">16px</span>;</span></div><div class="cl"><span>    <span class="p">width</span>: <span class="n">100px</span>;</span></div><div class="cl"><span><span class="b">}</span></span></div><div class="cl"><span></span></div><div class="cl"><span><span class="s">.buttons </span><span class="b">{</span></span></div><div class="cl"><span>    <span class="p">display</span>: <span class="k">flex</span>;</span></div><div class="cl"><span>    <span class="p">gap</span>: <span class="n">10px</span>;</span></div><div class="cl"><span>    <span class="p">flex-wrap</span>: <span class="k">wrap</span>;</span></div><div class="cl"><span>    <span class="p">margin-bottom</span>: <span class="n">24px</span>;</span></div><div class="cl"><span><span class="b">}</span></span></div><div class="cl"><span></span></div><div class="cl"><span><span class="s">button </span><span class="b">{</span></span></div><div class="cl"><span>    <span class="p">padding</span>: <span class="n">10px</span> <span class="n">18px</span>;</span></div></div><div class="a" style="left:366.5px;top:1039.25px;width:393.5px;height:10.75px;background:rgba(110,110,110,0.42)"></div><div class="a" style="left:905px;top:99px;width:68px;height:951px;background:#fff;overflow:hidden"><div class="a" style="left:0.5px;top:0;width:10px;height:2px;background:#c7d6f5"></div><svg class="a" style="left:0.5px;top:0;width:68px;height:210px;opacity:0.62" viewBox="0 0 68 210"><rect x="0.1" y="0.50" width="9.8" height="1.0" fill="#800000"/><rect x="11.1" y="0.50" width="0.8" height="1.0" fill="#0431fa"/><rect x="4.1" y="2.50" width="8.8" height="1.0" fill="#d73a2f"/><rect x="13.1" y="2.50" width="0.8" height="1.0" fill="#444444"/><rect x="15.1" y="2.50" width="4.8" height="1.0" fill="#098658"/><rect x="20.1" y="2.50" width="0.8" height="1.0" fill="#444444"/><rect x="4.1" y="4.50" width="5.8" height="1.0" fill="#d73a2f"/><rect x="10.1" y="4.50" width="0.8" height="1.0" fill="#444444"/><rect x="12.1" y="4.50" width="0.8" height="1.0" fill="#098658"/><rect x="14.1" y="4.50" width="3.8" height="1.0" fill="#0451a5"/><rect x="18.1" y="4.50" width="0.8" height="1.0" fill="#444444"/><rect x="4.1" y="6.50" width="6.8" height="1.0" fill="#d73a2f"/><rect x="11.1" y="6.50" width="0.8" height="1.0" fill="#444444"/><rect x="13.1" y="6.50" width="3.8" height="1.0" fill="#098658"/><rect x="17.1" y="6.50" width="0.8" height="1.0" fill="#444444"/><rect x="4.1" y="8.50" width="10.8" height="1.0" fill="#d73a2f"/><rect x="15.1" y="8.50" width="0.8" height="1.0" fill="#444444"/><rect x="17.1" y="8.50" width="12.8" height="1.0" fill="#444444"/><rect x="30.1" y="8.50" width="0.8" height="1.0" fill="#444444"/><rect x="32.1" y="8.50" width="17.8" height="1.0" fill="#444444"/><rect x="50.1" y="8.50" width="0.8" height="1.0" fill="#444444"/><rect x="52.1" y="8.50" width="5.8" height="1.0" fill="#a31515"/><rect x="59.1" y="8.50" width="2.8" height="1.0" fill="#a31515"/><rect x="62.1" y="8.50" width="0.8" height="1.0" fill="#444444"/><rect x="64.1" y="8.50" width="5.8" height="1.0" fill="#444444"/><rect x="70.1" y="8.50" width="0.8" height="1.0" fill="#444444"/><rect x="72.1" y="8.50" width="9.8" height="1.0" fill="#444444"/><rect x="82.1" y="8.50" width="0.8" height="1.0" fill="#444444"/><rect x="0.1" y="10.50" width="0.8" height="1.0" fill="#0431fa"/><rect x="0.1" y="14.50" width="1.8" height="1.0" fill="#800000"/><rect x="3.1" y="14.50" width="0.8" height="1.0" fill="#0431fa"/><rect x="4.1" y="16.50" width="12.8" height="1.0" fill="#d73a2f"/><rect x="17.1" y="16.50" width="0.8" height="1.0" fill="#444444"/><rect x="19.1" y="16.50" width="2.8" height="1.0" fill="#098658"/><rect x="22.1" y="16.50" width="0.8" height="1.0" fill="#444444"/><rect x="4.1" y="18.50" width="4.8" height="1.0" fill="#d73a2f"/><rect x="9.1" y="18.50" width="0.8" height="1.0" fill="#444444"/><rect x="11.1" y="18.50" width="3.8" height="1.0" fill="#0451a5"/><rect x="15.1" y="18.50" width="0.8" height="1.0" fill="#444444"/><rect x="0.1" y="20.50" width="0.8" height="1.0" fill="#0431fa"/><rect x="0.1" y="24.50" width="8.8" height="1.0" fill="#800000"/><rect x="10.1" y="24.50" width="0.8" height="1.0" fill="#0431fa"/><rect x="4.1" y="26.50" width="4.8" height="1.0" fill="#d73a2f"/><rect x="9.1" y="26.50" width="0.8" height="1.0" fill="#444444"/><rect x="11.1" y="26.50" width="3.8" height="1.0" fill="#0451a5"/><rect x="15.1" y="26.50" width="0.8" height="1.0" fill="#444444"/><rect x="4.1" y="28.50" width="9.8" height="1.0" fill="#d73a2f"/><rect x="14.1" y="28.50" width="0.8" height="1.0" fill="#444444"/><rect x="16.1" y="28.50" width="0.8" height="1.0" fill="#098658"/><rect x="17.1" y="28.50" width="0.8" height="1.0" fill="#444444"/><rect x="4.1" y="30.50" width="12.8" height="1.0" fill="#d73a2f"/><rect x="17.1" y="30.50" width="0.8" height="1.0" fill="#444444"/><rect x="19.1" y="30.50" width="3.8" height="1.0" fill="#098658"/><rect x="23.1" y="30.50" width="0.8" height="1.0" fill="#444444"/><rect x="0.1" y="32.50" width="0.8" height="1.0" fill="#0431fa"/><rect x="0.1" y="36.50" width="13.8" height="1.0" fill="#800000"/><rect x="15.1" y="36.50" width="0.8" height="1.0" fill="#0431fa"/><rect x="4.1" y="38.50" width="12.8" height="1.0" fill="#d73a2f"/><rect x="17.1" y="38.50" width="0.8" height="1.0" fill="#444444"/><rect x="19.1" y="38.50" width="3.8" height="1.0" fill="#098658"/><rect x="23.1" y="38.50" width="0.8" height="1.0" fill="#444444"/><rect x="0.1" y="40.50" width="0.8" height="1.0" fill="#0431fa"/><rect x="0.1" y="44.50" width="13.8" height="1.0" fill="#800000"/><rect x="15.1" y="44.50" width="4.8" height="1.0" fill="#800000"/><rect x="21.1" y="44.50" width="0.8" height="1.0" fill="#0431fa"/><rect x="4.1" y="46.50" width="6.8" height="1.0" fill="#d73a2f"/><rect x="11.1" y="46.50" width="0.8" height="1.0" fill="#444444"/><rect x="13.1" y="46.50" width="3.8" height="1.0" fill="#0451a5"/><rect x="17.1" y="46.50" width="0.8" height="1.0" fill="#444444"/><rect x="4.1" y="48.50" width="10.8" height="1.0" fill="#d73a2f"/><rect x="15.1" y="48.50" width="0.8" height="1.0" fill="#444444"/><rect x="17.1" y="48.50" width="5.8" height="1.0" fill="#0451a5"/><rect x="23.1" y="48.50" width="0.8" height="1.0" fill="#444444"/><rect x="4.1" y="50.50" width="2.8" height="1.0" fill="#d73a2f"/><rect x="7.1" y="50.50" width="0.8" height="1.0" fill="#444444"/><rect x="9.1" y="50.50" width="3.8" height="1.0" fill="#098658"/><rect x="13.1" y="50.50" width="0.8" height="1.0" fill="#444444"/><rect x="4.1" y="52.50" width="10.8" height="1.0" fill="#d73a2f"/><rect x="15.1" y="52.50" width="0.8" height="1.0" fill="#444444"/><rect x="17.1" y="52.50" width="2.8" height="1.0" fill="#098658"/><rect x="20.1" y="52.50" width="0.8" height="1.0" fill="#444444"/><rect x="0.1" y="54.50" width="0.8" height="1.0" fill="#0431fa"/><rect x="0.1" y="58.50" width="13.8" height="1.0" fill="#800000"/><rect x="15.1" y="58.50" width="4.8" height="1.0" fill="#800000"/><rect x="21.1" y="58.50" width="0.8" height="1.0" fill="#0431fa"/><rect x="4.1" y="60.50" width="6.8" height="1.0" fill="#d73a2f"/><rect x="11.1" y="60.50" width="0.8" height="1.0" fill="#444444"/><rect x="13.1" y="60.50" width="2.8" height="1.0" fill="#098658"/><rect x="17.1" y="60.50" width="3.8" height="1.0" fill="#098658"/><rect x="21.1" y="60.50" width="0.8" height="1.0" fill="#444444"/><rect x="4.1" y="62.50" width="5.8" height="1.0" fill="#d73a2f"/><rect x="10.1" y="62.50" width="0.8" height="1.0" fill="#444444"/><rect x="12.1" y="62.50" width="2.8" height="1.0" fill="#098658"/><rect x="16.1" y="62.50" width="4.8" height="1.0" fill="#0451a5"/><rect x="22.1" y="62.50" width="3.8" height="1.0" fill="#0451a5"/><rect x="26.1" y="62.50" width="0.8" height="1.0" fill="#444444"/><rect x="4.1" y="64.50" width="12.8" height="1.0" fill="#d73a2f"/><rect x="17.1" y="64.50" width="0.8" height="1.0" fill="#444444"/><rect x="19.1" y="64.50" width="2.8" height="1.0" fill="#098658"/><rect x="22.1" y="64.50" width="0.8" height="1.0" fill="#444444"/><rect x="4.1" y="66.50" width="8.8" height="1.0" fill="#d73a2f"/><rect x="13.1" y="66.50" width="0.8" height="1.0" fill="#444444"/><rect x="15.1" y="66.50" width="3.8" height="1.0" fill="#098658"/><rect x="19.1" y="66.50" width="0.8" height="1.0" fill="#444444"/><rect x="4.1" y="68.50" width="4.8" height="1.0" fill="#d73a2f"/><rect x="9.1" y="68.50" width="0.8" height="1.0" fill="#444444"/><rect x="11.1" y="68.50" width="4.8" height="1.0" fill="#098658"/><rect x="16.1" y="68.50" width="0.8" height="1.0" fill="#444444"/><rect x="0.1" y="70.50" width="0.8" height="1.0" fill="#0431fa"/><rect x="0.1" y="74.50" width="7.8" height="1.0" fill="#800000"/><rect x="9.1" y="74.50" width="0.8" height="1.0" fill="#0431fa"/><rect x="4.1" y="76.50" width="6.8" height="1.0" fill="#d73a2f"/><rect x="11.1" y="76.50" width="0.8" height="1.0" fill="#444444"/><rect x="13.1" y="76.50" width="3.8" height="1.0" fill="#0451a5"/><rect x="17.1" y="76.50" width="0.8" height="1.0" fill="#444444"/><rect x="4.1" y="78.50" width="2.8" height="1.0" fill="#d73a2f"/><rect x="7.1" y="78.50" width="0.8" height="1.0" fill="#444444"/><rect x="9.1" y="78.50" width="3.8" height="1.0" fill="#098658"/><rect x="13.1" y="78.50" width="0.8" height="1.0" fill="#444444"/><rect x="4.1" y="80.50" width="8.8" height="1.0" fill="#d73a2f"/><rect x="13.1" y="80.50" width="0.8" height="1.0" fill="#444444"/><rect x="15.1" y="80.50" width="3.8" height="1.0" fill="#0451a5"/><rect x="19.1" y="80.50" width="0.8" height="1.0" fill="#444444"/><rect x="4.1" y="82.50" width="12.8" height="1.0" fill="#d73a2f"/><rect x="17.1" y="82.50" width="0.8" height="1.0" fill="#444444"/><rect x="19.1" y="82.50" width="3.8" height="1.0" fill="#098658"/><rect x="23.1" y="82.50" width="0.8" height="1.0" fill="#444444"/><rect x="0.1" y="84.50" width="0.8" height="1.0" fill="#0431fa"/><rect x="0.1" y="88.50" width="5.8" height="1.0" fill="#800000"/><rect x="7.1" y="88.50" width="0.8" height="1.0" fill="#0431fa"/><rect x="4.1" y="90.50" width="6.8" height="1.0" fill="#d73a2f"/><rect x="11.1" y="90.50" width="0.8" height="1.0" fill="#444444"/><rect x="13.1" y="90.50" width="3.8" height="1.0" fill="#098658"/><rect x="18.1" y="90.50" width="3.8" height="1.0" fill="#098658"/><rect x="22.1" y="90.50" width="0.8" height="1.0" fill="#444444"/><rect x="4.1" y="92.50" width="5.8" height="1.0" fill="#d73a2f"/><rect x="10.1" y="92.50" width="0.8" height="1.0" fill="#444444"/><rect x="12.1" y="92.50" width="2.8" height="1.0" fill="#098658"/><rect x="16.1" y="92.50" width="4.8" height="1.0" fill="#0451a5"/><rect x="22.1" y="92.50" width="3.8" height="1.0" fill="#0451a5"/><rect x="26.1" y="92.50" width="0.8" height="1.0" fill="#444444"/><rect x="4.1" y="94.50" width="12.8" height="1.0" fill="#d73a2f"/><rect x="17.1" y="94.50" width="0.8" height="1.0" fill="#444444"/><rect x="19.1" y="94.50" width="2.8" height="1.0" fill="#098658"/><rect x="22.1" y="94.50" width="0.8" height="1.0" fill="#444444"/><rect x="4.1" y="96.50" width="9.8" height="1.0" fill="#d73a2f"/><rect x="14.1" y="96.50" width="0.8" height="1.0" fill="#444444"/><rect x="16.1" y="96.50" width="4.8" height="1.0" fill="#0451a5"/><rect x="21.1" y="96.50" width="0.8" height="1.0" fill="#444444"/><rect x="4.1" y="98.50" width="5.8" height="1.0" fill="#d73a2f"/><rect x="10.1" y="98.50" width="0.8" height="1.0" fill="#444444"/><rect x="12.1" y="98.50" width="6.8" height="1.0" fill="#0451a5"/><rect x="19.1" y="98.50" width="0.8" height="1.0" fill="#444444"/><rect x="4.1" y="100.50" width="8.8" height="1.0" fill="#d73a2f"/><rect x="13.1" y="100.50" width="0.8" height="1.0" fill="#444444"/><rect x="15.1" y="100.50" width="3.8" height="1.0" fill="#098658"/><rect x="19.1" y="100.50" width="0.8" height="1.0" fill="#444444"/><rect x="4.1" y="102.50" width="9.8" height="1.0" fill="#d73a2f"/><rect x="14.1" y="102.50" width="0.8" height="1.0" fill="#444444"/><rect x="16.1" y="102.50" width="2.8" height="1.0" fill="#0451a5"/><rect x="20.1" y="102.50" width="3.8" height="1.0" fill="#098658"/><rect x="24.1" y="102.50" width="0.8" height="1.0" fill="#444444"/><rect x="0.1" y="104.50" width="0.8" height="1.0" fill="#0431fa"/><rect x="0.1" y="108.50" width="26.8" height="1.0" fill="#800000"/><rect x="28.1" y="108.50" width="0.8" height="1.0" fill="#0431fa"/><rect x="4.1" y="110.50" width="9.8" height="1.0" fill="#d73a2f"/><rect x="14.1" y="110.50" width="0.8" height="1.0" fill="#444444"/><rect x="16.1" y="110.50" width="6.8" height="1.0" fill="#0451a5"/><rect x="23.1" y="110.50" width="0.8" height="1.0" fill="#444444"/><rect x="4.1" y="112.50" width="11.8" height="1.0" fill="#d73a2f"/><rect x="16.1" y="112.50" width="0.8" height="1.0" fill="#444444"/><rect x="18.1" y="112.50" width="3.8" height="1.0" fill="#0451a5"/><rect x="22.1" y="112.50" width="0.8" height="1.0" fill="#444444"/><rect x="0.1" y="114.50" width="0.8" height="1.0" fill="#0431fa"/><rect x="0.1" y="118.50" width="14.8" height="1.0" fill="#800000"/><rect x="16.1" y="118.50" width="0.8" height="1.0" fill="#0431fa"/><rect x="4.1" y="120.50" width="6.8" height="1.0" fill="#d73a2f"/><rect x="11.1" y="120.50" width="0.8" height="1.0" fill="#444444"/><rect x="13.1" y="120.50" width="2.8" height="1.0" fill="#098658"/><rect x="16.1" y="120.50" width="0.8" height="1.0" fill="#444444"/><rect x="4.1" y="122.50" width="5.8" height="1.0" fill="#d73a2f"/><rect x="10.1" y="122.50" width="0.8" height="1.0" fill="#444444"/><rect x="12.1" y="122.50" width="10.8" height="1.0" fill="#0451a5"/><rect x="23.1" y="122.50" width="0.8" height="1.0" fill="#444444"/><rect x="0.1" y="124.50" width="0.8" height="1.0" fill="#0431fa"/><rect x="0.1" y="128.50" width="13.8" height="1.0" fill="#800000"/><rect x="15.1" y="128.50" width="0.8" height="1.0" fill="#0431fa"/><rect x="4.1" y="130.50" width="9.8" height="1.0" fill="#d73a2f"/><rect x="14.1" y="130.50" width="0.8" height="1.0" fill="#444444"/><rect x="16.1" y="130.50" width="6.8" height="1.0" fill="#0451a5"/><rect x="23.1" y="130.50" width="0.8" height="1.0" fill="#444444"/><rect x="4.1" y="132.50" width="4.8" height="1.0" fill="#d73a2f"/><rect x="9.1" y="132.50" width="0.8" height="1.0" fill="#444444"/><rect x="11.1" y="132.50" width="4.8" height="1.0" fill="#0451a5"/><rect x="16.1" y="132.50" width="0.8" height="1.0" fill="#444444"/><rect x="4.1" y="134.50" width="11.8" height="1.0" fill="#d73a2f"/><rect x="16.1" y="134.50" width="0.8" height="1.0" fill="#444444"/><rect x="18.1" y="134.50" width="6.8" height="1.0" fill="#0451a5"/><rect x="25.1" y="134.50" width="0.8" height="1.0" fill="#444444"/><rect x="0.1" y="136.50" width="0.8" height="1.0" fill="#0431fa"/><rect x="0.1" y="140.50" width="34.8" height="1.0" fill="#800000"/><rect x="36.1" y="140.50" width="0.8" height="1.0" fill="#0431fa"/><rect x="4.1" y="142.50" width="9.8" height="1.0" fill="#d73a2f"/><rect x="14.1" y="142.50" width="0.8" height="1.0" fill="#444444"/><rect x="16.1" y="142.50" width="6.8" height="1.0" fill="#0451a5"/><rect x="23.1" y="142.50" width="0.8" height="1.0" fill="#444444"/><rect x="0.1" y="144.50" width="0.8" height="1.0" fill="#0431fa"/><rect x="0.1" y="148.50" width="7.8" height="1.0" fill="#800000"/><rect x="9.1" y="148.50" width="0.8" height="1.0" fill="#0431fa"/><rect x="4.1" y="150.50" width="6.8" height="1.0" fill="#d73a2f"/><rect x="11.1" y="150.50" width="0.8" height="1.0" fill="#444444"/><rect x="13.1" y="150.50" width="3.8" height="1.0" fill="#0451a5"/><rect x="17.1" y="150.50" width="0.8" height="1.0" fill="#444444"/><rect x="4.1" y="152.50" width="2.8" height="1.0" fill="#d73a2f"/><rect x="7.1" y="152.50" width="0.8" height="1.0" fill="#444444"/><rect x="9.1" y="152.50" width="3.8" height="1.0" fill="#098658"/><rect x="13.1" y="152.50" width="0.8" height="1.0" fill="#444444"/><rect x="0.1" y="154.50" width="0.8" height="1.0" fill="#0431fa"/><rect x="0.1" y="158.50" width="11.8" height="1.0" fill="#800000"/><rect x="13.1" y="158.50" width="0.8" height="1.0" fill="#0431fa"/><rect x="4.1" y="160.50" width="5.8" height="1.0" fill="#d73a2f"/><rect x="10.1" y="160.50" width="0.8" height="1.0" fill="#444444"/><rect x="12.1" y="160.50" width="2.8" height="1.0" fill="#098658"/><rect x="16.1" y="160.50" width="4.8" height="1.0" fill="#0451a5"/><rect x="22.1" y="160.50" width="6.8" height="1.0" fill="#0451a5"/><rect x="29.1" y="160.50" width="0.8" height="1.0" fill="#444444"/><rect x="4.1" y="162.50" width="12.8" height="1.0" fill="#d73a2f"/><rect x="17.1" y="162.50" width="0.8" height="1.0" fill="#444444"/><rect x="19.1" y="162.50" width="2.8" height="1.0" fill="#098658"/><rect x="22.1" y="162.50" width="0.8" height="1.0" fill="#444444"/><rect x="4.1" y="164.50" width="6.8" height="1.0" fill="#d73a2f"/><rect x="11.1" y="164.50" width="0.8" height="1.0" fill="#444444"/><rect x="13.1" y="164.50" width="3.8" height="1.0" fill="#098658"/><rect x="17.1" y="164.50" width="0.8" height="1.0" fill="#444444"/><rect x="4.1" y="166.50" width="9.8" height="1.0" fill="#d73a2f"/><rect x="14.1" y="166.50" width="0.8" height="1.0" fill="#444444"/><rect x="16.1" y="166.50" width="6.8" height="1.0" fill="#0451a5"/><rect x="23.1" y="166.50" width="0.8" height="1.0" fill="#444444"/><rect x="0.1" y="168.50" width="0.8" height="1.0" fill="#0431fa"/><rect x="0.1" y="172.50" width="11.8" height="1.0" fill="#800000"/><rect x="13.1" y="172.50" width="1.8" height="1.0" fill="#800000"/><rect x="16.1" y="172.50" width="0.8" height="1.0" fill="#0431fa"/><rect x="4.1" y="174.50" width="5.8" height="1.0" fill="#d73a2f"/><rect x="10.1" y="174.50" width="0.8" height="1.0" fill="#444444"/><rect x="12.1" y="174.50" width="0.8" height="1.0" fill="#098658"/><rect x="14.1" y="174.50" width="0.8" height="1.0" fill="#098658"/><rect x="16.1" y="174.50" width="3.8" height="1.0" fill="#098658"/><rect x="21.1" y="174.50" width="0.8" height="1.0" fill="#098658"/><rect x="22.1" y="174.50" width="0.8" height="1.0" fill="#444444"/><rect x="4.1" y="176.50" width="8.8" height="1.0" fill="#d73a2f"/><rect x="13.1" y="176.50" width="0.8" height="1.0" fill="#444444"/><rect x="15.1" y="176.50" width="3.8" height="1.0" fill="#098658"/><rect x="19.1" y="176.50" width="0.8" height="1.0" fill="#444444"/><rect x="4.1" y="178.50" width="4.8" height="1.0" fill="#d73a2f"/><rect x="9.1" y="178.50" width="0.8" height="1.0" fill="#444444"/><rect x="11.1" y="178.50" width="3.8" height="1.0" fill="#0451a5"/><rect x="15.1" y="178.50" width="0.8" height="1.0" fill="#444444"/><rect x="4.1" y="180.50" width="13.8" height="1.0" fill="#d73a2f"/><rect x="18.1" y="180.50" width="0.8" height="1.0" fill="#444444"/><rect x="20.1" y="180.50" width="8.8" height="1.0" fill="#0451a5"/><rect x="29.1" y="180.50" width="0.8" height="1.0" fill="#444444"/><rect x="4.1" y="182.50" width="13.8" height="1.0" fill="#d73a2f"/><rect x="18.1" y="182.50" width="0.8" height="1.0" fill="#444444"/><rect x="20.1" y="182.50" width="4.8" height="1.0" fill="#098658"/><rect x="25.1" y="182.50" width="0.8" height="1.0" fill="#444444"/><rect x="0.1" y="184.50" width="0.8" height="1.0" fill="#0431fa"/><rect x="0.1" y="188.50" width="12.8" height="1.0" fill="#800000"/><rect x="14.1" y="188.50" width="0.8" height="1.0" fill="#0431fa"/><rect x="4.1" y="190.50" width="8.8" height="1.0" fill="#d73a2f"/><rect x="13.1" y="190.50" width="0.8" height="1.0" fill="#444444"/><rect x="15.1" y="190.50" width="3.8" height="1.0" fill="#098658"/><rect x="19.1" y="190.50" width="0.8" height="1.0" fill="#444444"/><rect x="4.1" y="192.50" width="4.8" height="1.0" fill="#d73a2f"/><rect x="9.1" y="192.50" width="0.8" height="1.0" fill="#444444"/><rect x="11.1" y="192.50" width="3.8" height="1.0" fill="#0451a5"/><rect x="15.1" y="192.50" width="0.8" height="1.0" fill="#444444"/><rect x="4.1" y="194.50" width="10.8" height="1.0" fill="#d73a2f"/><rect x="15.1" y="194.50" width="0.8" height="1.0" fill="#444444"/><rect x="17.1" y="194.50" width="7.8" height="1.0" fill="#a31515"/><rect x="25.1" y="194.50" width="0.8" height="1.0" fill="#444444"/><rect x="27.1" y="194.50" width="6.8" height="1.0" fill="#a31515"/><rect x="34.1" y="194.50" width="0.8" height="1.0" fill="#444444"/><rect x="36.1" y="194.50" width="8.8" height="1.0" fill="#0451a5"/><rect x="45.1" y="194.50" width="0.8" height="1.0" fill="#444444"/><rect x="4.1" y="196.50" width="9.8" height="1.0" fill="#d73a2f"/><rect x="14.1" y="196.50" width="0.8" height="1.0" fill="#444444"/><rect x="16.1" y="196.50" width="8.8" height="1.0" fill="#0451a5"/><rect x="25.1" y="196.50" width="0.8" height="1.0" fill="#444444"/><rect x="0.1" y="198.50" width="0.8" height="1.0" fill="#0431fa"/></svg></div><div class="a" style="left:973.2px;top:99px;width:0.5px;height:951px;background:#ececec"></div><div class="a" style="left:900.5px;top:99px;width:0.75px;height:951px;background:#eeeeee"></div><div class="a" style="left:973.65px;top:99px;width:12.35px;height:299px;background:#c1c1c1"></div><div class="a" style="left:973.65px;top:99px;width:12.35px;height:2px;background:#8f8f8f"></div><div class="a" style="left:978.5px;top:101px;width:4.5px;height:4.5px;background:#a3a3a3"></div><div class="a" style="left:986px;top:99px;width:1px;height:951px;background:#f5f5f5"></div><div class="a" style="left:987px;top:41px;width:4px;height:1009px;background:#dcdcdc"></div><div class="a" style="left:1495.5px;top:44px;width:66.5px;height:24px;border-radius:4px;background:#e9e9eb"></div><div class="t" style="left:1503.2px;top:50.00px;font-size:12px;height:12px;line-height:12px;color:#111111;font-weight:400;font-family:'Liberation Mono';">esbuild</div><div class="a" style="left:1570px;top:41px;width:30px;height:30px;border-radius:5px;background:#e9e9eb"></div><svg class="i" viewBox="0 0 24 24" style="left:1578.50px;top:49.50px;width:13px;height:13px;stroke-width:2;color:#1f2937"><path d="M12.034 12.681a.498.498 0 0 1 .647-.647l9 3.5a.5.5 0 0 1-.033.943l-3.444 1.068a1 1 0 0 0-.66.66l-1.067 3.443a.5.5 0 0 1-.943.033z"/><path d="M5 3a2 2 0 0 0-2 2"/><path d="M19 3a2 2 0 0 1 2 2"/><path d="M5 21a2 2 0 0 1-2-2"/><path d="M9 3h1"/><path d="M9 21h2"/><path d="M14 3h1"/><path d="M3 9v1"/><path d="M21 9v2"/><path d="M3 14v1"/></svg><div class="a" style="left:1608px;top:42px;width:28px;height:28px;border-radius:5px;background:#e9e9eb"></div><svg class="i" viewBox="0 0 24 24" style="left:1615.50px;top:49.50px;width:13px;height:13px;stroke-width:2;color:#1f2937"><path d="M21 13v6a2 2 0 0 1-2 2H5a2 2 0 0 1-2-2V5a2 2 0 0 1 2-2h6"/><path d="m21 3-9 9"/><path d="M15 3h6v6"/></svg><div class="a" style="left:1644px;top:42px;width:28px;height:28px;border-radius:5px;background:#e9e9eb"></div><svg class="i" viewBox="0 0 24 24" style="left:1651.50px;top:49.50px;width:13px;height:13px;stroke-width:2;color:#1f2937"><path d="M3 12a9 9 0 0 1 9-9 9.75 9.75 0 0 1 6.74 2.74L21 8"/><path d="M21 3v5h-5"/><path d="M21 12a9 9 0 0 1-9 9 9.75 9.75 0 0 1-6.74-2.74L3 16"/><path d="M8 16H3v5"/></svg><div class="t" style="left:1036px;top:94.65px;font-size:31.5px;height:31.5px;line-height:31.5px;color:#333333;font-weight:700;font-family:'Liberation Sans';">Full-code app demo</div><div class="t" style="left:1036px;top:135.20px;font-size:16.2px;height:16.2px;line-height:16.2px;color:#666666;font-weight:400;font-family:'Liberation Sans';">Calling 2 backend runnables</div><div class="t" style="left:1036px;top:186.20px;font-size:16.8px;height:16.8px;line-height:16.8px;color:#111111;font-weight:400;font-family:'Liberation Sans';-webkit-text-stroke:0.45px #111111">Input number:</div><div class="a" style="left:1150.7px;top:177px;width:125px;height:35.6px;box-sizing:border-box;border:1px solid #dddddd;border-radius:6px;background:#fff"></div><div class="t" style="left:1162.3px;top:186.00px;font-size:16px;height:16px;line-height:16px;color:#111111;font-weight:400;font-family:'Liberation Sans';">42</div><div class="a" style="left:1036px;top:233px;width:136px;height:37.6px;box-sizing:border-box;border:1px solid #dddddd;border-radius:6px;background:#ffffff;color:#111;font-size:14.1px;line-height:35.6px;text-align:center;white-space:pre">Multiply number</div><div class="a" style="left:1182.5px;top:233px;width:128.5px;height:37.6px;box-sizing:border-box;border:1px solid #dddddd;border-radius:6px;background:#ffffff;color:#111;font-size:14.1px;line-height:35.6px;text-align:center;white-space:pre">Get timestamp</div><div class="a" style="left:1321px;top:233px;width:95px;height:37.6px;box-sizing:border-box;border:1px solid #4e82ee;border-radius:6px;background:#4e82ee;color:#fff;font-size:14.1px;line-height:35.6px;text-align:center;white-space:pre">Run both</div><div class="a" style="left:1036px;top:295.5px;width:600px;height:80.80000000000001px;box-sizing:border-box;border:1px solid #e0e0e0;border-radius:8px;background:#fafafa"></div><div class="t" style="left:1053px;top:313.30px;font-size:14.4px;height:14.4px;line-height:14.4px;color:#666666;font-weight:700;font-family:'Liberation Sans';letter-spacing:0.4px">MULTIPLY (TYPESCRIPT)</div><div class="t" style="left:1052.5px;top:341.98px;font-size:16.05px;height:16.05px;line-height:16.05px;color:#333333;font-weight:400;font-family:'Liberation Mono';transform:scaleY(1.1)">Click a button to see result</div><div class="a" style="left:1036px;top:393px;width:600px;height:81.5px;box-sizing:border-box;border:1px solid #e0e0e0;border-radius:8px;background:#fafafa"></div><div class="t" style="left:1053px;top:411.40px;font-size:14.4px;height:14.4px;line-height:14.4px;color:#666666;font-weight:700;font-family:'Liberation Sans';letter-spacing:0.4px">TIMESTAMP (PYTHON)</div><div class="t" style="left:1052.5px;top:439.98px;font-size:16.05px;height:16.05px;line-height:16.05px;color:#333333;font-weight:400;font-family:'Liberation Mono';transform:scaleY(1.1)">Click a button to see result</div><div class="a" style="left:1180px;top:810px;width:500px;height:240px;box-sizing:border-box;border:1px solid #e5e7eb;border-radius:6px 6px 0 0;background:#f9f9fb"></div><div class="a" style="left:1181px;top:829px;width:498px;height:221px;overflow:hidden"><div class="a" style="left:4px;top:-6.9px;font-family:'Liberation Mono',monospace;font-size:12px;line-height:16px;white-space:pre;color:#2d3748"><div style="height:16px"><span style="display:inline-block;transform:scaleY(1.07);transform-origin:0 60%">Using cached resolution for scheduler@^0.25.0: 0.25.0</span></div><div style="height:16px"><span style="display:inline-block;transform:scaleY(1.07);transform-origin:0 60%"> </span></div><div style="height:16px"><span style="display:inline-block;transform:scaleY(1.07);transform-origin:0 60%">Resolved scheduler@0.25.0</span></div><div style="height:16px"><span style="display:inline-block;transform:scaleY(1.07);transform-origin:0 60%">Using idb cache for scheduler@0.25.0 …</span></div><div style="height:16px"><span style="display:inline-block;transform:scaleY(1.07);transform-origin:0 60%">Installing csstype …</span></div><div style="height:16px"><span style="display:inline-block;transform:scaleY(1.07);transform-origin:0 60%">Using cached resolution for csstype@^3.2.2: 3.2.3</span></div><div style="height:16px"><span style="display:inline-block;transform:scaleY(1.07);transform-origin:0 60%"> </span></div><div style="height:16px"><span style="display:inline-block;transform:scaleY(1.07);transform-origin:0 60%">Resolved csstype@3.2.3</span></div><div style="height:16px"><span style="display:inline-block;transform:scaleY(1.07);transform-origin:0 60%">Using idb cache for csstype@3.2.3 …</span></div><div style="height:16px"><span style="display:inline-block;transform:scaleY(1.07);transform-origin:0 60%"> </span></div><div style="height:16px"><span style="display:inline-block;transform:scaleY(1.07);transform-origin:0 60%">[esbuild] Build started...</span></div><div style="height:16px"><span style="display:inline-block;transform:scaleY(1.07);transform-origin:0 60%">updated node_modules/</span></div><div style="height:16px"><span style="display:inline-block;transform:scaleY(1.07);transform-origin:0 60%">[esbuild] Build successful in 0.39s</span></div></div></div><div class="t" style="left:1193px;top:814.75px;font-size:12.5px;height:12.5px;line-height:12.5px;color:#2d3748;font-weight:400;font-family:'Liberation Sans';">Logs</div><svg class="i" viewBox="0 0 24 24" style="left:1229.00px;top:816.50px;width:10px;height:10px;stroke-width:2;color:#2d3748"><path d="m6 9 6 6 6-6"/></svg><div class="t" style="left:1248.6px;top:814.75px;font-size:12.5px;height:12.5px;line-height:12.5px;color:#9ca3af;font-weight:400;font-family:'Liberation Sans';">(379)</div></div></body></html>
